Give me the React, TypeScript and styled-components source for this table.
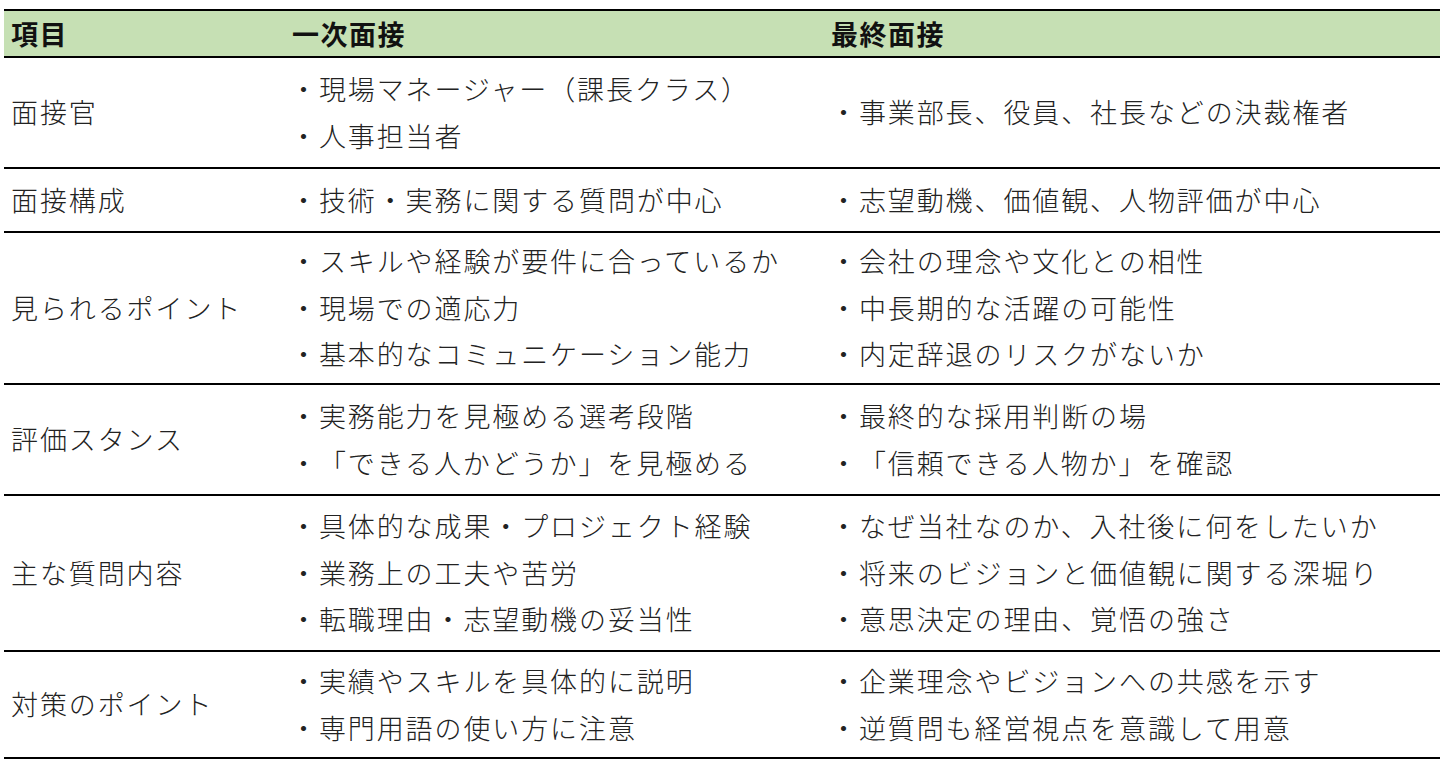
import styled, { createGlobalStyle } from "styled-components";

const GlobalStyle = createGlobalStyle`
  html, body { margin: 0; padding: 0; background: #ffffff; }
  body {
    font-family: "Noto Sans CJK JP", "Noto Sans", sans-serif;
    color: #1c1c1c;
    text-spacing-trim: space-all;
  }
`;

interface RowData {
  label: string;
  first: string[];
  final: string[];
  height: number;
}

const rows: RowData[] = [
  {
    label: "面接官",
    first: ["・現場マネージャー（課長クラス）", "・人事担当者"],
    final: ["・事業部長、役員、社長などの決裁権者"],
    height: 111,
  },
  {
    label: "面接構成",
    first: ["・技術・実務に関する質問が中心"],
    final: ["・志望動機、価値観、人物評価が中心"],
    height: 64,
  },
  {
    label: "見られるポイント",
    first: ["・スキルや経験が要件に合っているか", "・現場での適応力", "・基本的なコミュニケーション能力"],
    final: ["・会社の理念や文化との相性", "・中長期的な活躍の可能性", "・内定辞退のリスクがないか"],
    height: 152,
  },
  {
    label: "評価スタンス",
    first: ["・実務能力を見極める選考段階", "・「できる人かどうか」を見極める"],
    final: ["・最終的な採用判断の場", "・「信頼できる人物か」を確認"],
    height: 111,
  },
  {
    label: "主な質問内容",
    first: ["・具体的な成果・プロジェクト経験", "・業務上の工夫や苦労", "・転職理由・志望動機の妥当性"],
    final: ["・なぜ当社なのか、入社後に何をしたいか", "・将来のビジョンと価値観に関する深堀り", "・意思決定の理由、覚悟の強さ"],
    height: 156,
  },
  {
    label: "対策のポイント",
    first: ["・実績やスキルを具体的に説明", "・専門用語の使い方に注意"],
    final: ["・企業理念やビジョンへの共感を示す", "・逆質問も経営視点を意識して用意"],
    height: 107,
  },
];

export default function App() {
  return (
    <>
      <GlobalStyle />
      <Page>
        <Table>
          <HeaderRow>
            <HeadCell $pad={7}>項目</HeadCell>
            <HeadCell $pad={7}>一次面接</HeadCell>
            <HeadCell $pad={6}>最終面接</HeadCell>
          </HeaderRow>
          {rows.map((r) => (
            <BodyRow key={r.label} $h={r.height}>
              <Cell $pad={7}>
                <Line>{r.label}</Line>
              </Cell>
              <Cell $pad={5}>
                {r.first.map((t) => (
                  <Line key={t}>{t}</Line>
                ))}
              </Cell>
              <Cell $pad={5}>
                {r.final.map((t) => (
                  <Line key={t}>{t}</Line>
                ))}
              </Cell>
            </BodyRow>
          ))}
        </Table>
      </Page>
    </>
  );
}

const Page = styled.div`
  padding: 9px 7px 0 4px;
  width: 1447px;
  height: 760px;
  box-sizing: border-box;
  overflow: hidden;
`;

const Table = styled.div`
  display: flex;
  flex-direction: column;
  width: 1436px;
`;

const cols = "281px 540px 1fr";

const HeaderRow = styled.div`
  display: grid;
  grid-template-columns: ${cols};
  height: 49px;
  box-sizing: border-box;
  background: #c6e0b4;
  border-top: 2px solid #000;
  border-bottom: 2px solid #000;
`;

const HeadCell = styled.div<{ $pad: number }>`
  display: flex;
  align-items: center;
  padding-left: ${(p) => p.$pad}px;
  font-size: 27px;
  font-weight: 700;
  letter-spacing: 1.5px;
  color: #111;
`;

const BodyRow = styled.div<{ $h: number }>`
  display: grid;
  grid-template-columns: ${cols};
  height: ${(p) => p.$h}px;
  box-sizing: border-box;
  border-bottom: 2px solid #000;
`;

const Cell = styled.div<{ $pad: number }>`
  display: flex;
  flex-direction: column;
  justify-content: center;
  padding-left: ${(p) => p.$pad}px;
`;

const Line = styled.div`
  font-size: 27px;
  line-height: 46.5px;
  letter-spacing: 1.9px;
  white-space: nowrap;
  font-weight: 300;
  color: #222;
`;
